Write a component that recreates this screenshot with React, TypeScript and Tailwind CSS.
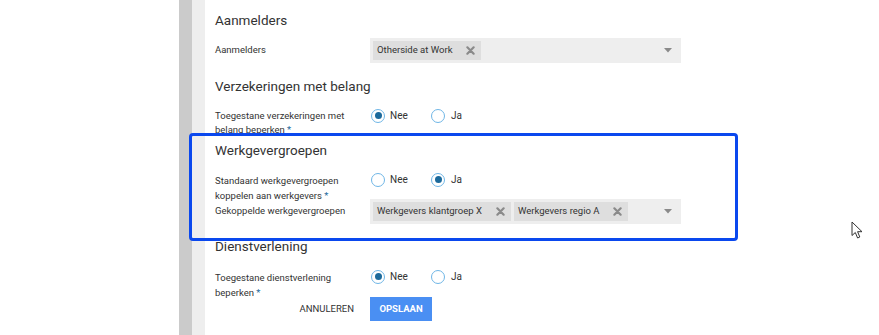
import React from "react";

const font = { fontFamily: "Roboto, 'Liberation Sans', sans-serif" };

function Radio({ checked }: { checked: boolean }) {
  return (
    <span className="flex h-[14px] w-[14px] shrink-0 items-center justify-center rounded-full border-[1.5px] border-[#6fb6e6] bg-white">
      {checked && <span className="h-[7px] w-[7px] rounded-full bg-[#1c6a9c]" />}
    </span>
  );
}

function RadioPair({ value }: { value: "nee" | "ja" }) {
  return (
    <div className="ml-[1px] flex items-center text-[10px] text-[#333]">
      <Radio checked={value === "nee"} />
      <span className="ml-[5px] w-[41px]">Nee</span>
      <Radio checked={value === "ja"} />
      <span className="ml-[6px]">Ja</span>
    </div>
  );
}

function XIcon() {
  return (
    <svg width="9" height="9" viewBox="0 0 10 10" className="shrink-0">
      <path d="M1.5 1.5 L8.5 8.5 M8.5 1.5 L1.5 8.5" stroke="#8a8a8a" strokeWidth="2.4" strokeLinecap="round" />
    </svg>
  );
}

function Chip({ label, width }: { label: string; width: number }) {
  return (
    <div
      className="flex h-[19px] items-center justify-between bg-[#dedede] pl-[4px] pr-[6px] text-[9.5px] text-[#333]"
      style={{ width }}
    >
      <span className="whitespace-nowrap">{label}</span>
      <XIcon />
    </div>
  );
}

function Select({ chips }: { chips: { label: string; width: number }[] }) {
  return (
    <div className="flex h-[25px] w-[311px] items-center gap-[3px] bg-[#eeeeee] pl-[3px]">
      {chips.map((c) => (
        <Chip key={c.label} label={c.label} width={c.width} />
      ))}
      <div className="ml-auto mr-[9px] flex">
        <svg width="8" height="5" viewBox="0 0 8 5">
          <path d="M0 0 L8 0 L4 4.5 Z" fill="#8a8a8a" />
        </svg>
      </div>
    </div>
  );
}

function Heading({ children, className = "" }: { children: React.ReactNode; className?: string }) {
  return <div className={`h-[20px] text-[13.5px] leading-[20px] text-[#333] ${className}`}>{children}</div>;
}

function Req() {
  return <span className="text-[#1c6a9c]"> *</span>;
}

export default function App() {
  return (
    <div className="relative h-[335px] w-[879px] overflow-hidden bg-white" style={font}>
      <div className="flex h-full">
        <div className="w-[179px] shrink-0" />
        <div className="w-[13px] shrink-0 bg-[#cbcbcb]" />
        <div className="w-[13px] shrink-0 bg-[#eeeeee]" />
        <div className="flex flex-1 flex-col pl-[10px]">
          <Heading className="mt-[10px]">Aanmelders</Heading>
          <div className="mt-[8px] flex h-[24px] items-center">
            <div className="w-[155px] text-[9.5px] text-[#333]">Aanmelders</div>
            <Select chips={[{ label: "Otherside at Work", width: 108 }]} />
          </div>
          <Heading className="mt-[14px]">Verzekeringen met belang</Heading>
          <div className="mt-[13px] flex items-start">
            <div className="w-[155px] text-[9.5px] leading-[14px] text-[#333]">
              Toegestane verzekeringen met
              <br />
              belang beperken
              <Req />
            </div>
            <div className="mt-[-1px]">
              <RadioPair value="nee" />
            </div>
          </div>
          <Heading className="mt-[3px]">Werkgevergroepen</Heading>
          <div className="mt-[13px] flex items-start">
            <div className="w-[155px] text-[9.5px] leading-[15px] text-[#333]">
              Standaard werkgevergroepen
              <br />
              koppelen aan werkgevers
              <Req />
            </div>
            <div className="mt-[-1px]">
              <RadioPair value="ja" />
            </div>
          </div>
          <div className="mt-[-4px] flex h-[25px] items-center">
            <div className="w-[155px] text-[9.5px] text-[#333]">Gekoppelde werkgevergroepen</div>
            <Select
              chips={[
                { label: "Werkgevers klantgroep X", width: 138 },
                { label: "Werkgevers regio A", width: 114 },
              ]}
            />
          </div>
          <Heading className="mt-[12px]">Dienstverlening</Heading>
          <div className="mt-[14px] flex items-start">
            <div className="w-[155px] text-[9.5px] leading-[15px] text-[#333]">
              Toegestane dienstverlening
              <br />
              beperken
              <Req />
            </div>
            <div className="mt-[-1px]">
              <RadioPair value="nee" />
            </div>
          </div>
          <div className="mt-[-3px] flex h-[24px] items-center">
            <div className="flex w-[155px] justify-end pr-[16px]">
              <span className="text-[9.5px] text-[#333]">ANNULEREN</span>
            </div>
            <div className="flex h-[24px] w-[62px] items-center justify-center bg-[#4a8ff3] text-[9.5px] font-bold text-white">
              OPSLAAN
            </div>
          </div>
        </div>
      </div>

      <div className="pointer-events-none absolute left-[189px] top-[133px] h-[108px] w-[549px] rounded-[4px] border-[3px] border-[#0a48ee]" />

      <svg className="absolute left-[851px] top-[221px]" width="14" height="19" viewBox="0 0 14 19">
        <path
          d="M1 1 L1 14.5 L4.3 11.5 L6.6 17 L8.8 16 L6.6 10.7 L11 10.7 Z"
          fill="white"
          stroke="#333"
          strokeWidth="1"
          strokeLinejoin="round"
        />
      </svg>
    </div>
  );
}
